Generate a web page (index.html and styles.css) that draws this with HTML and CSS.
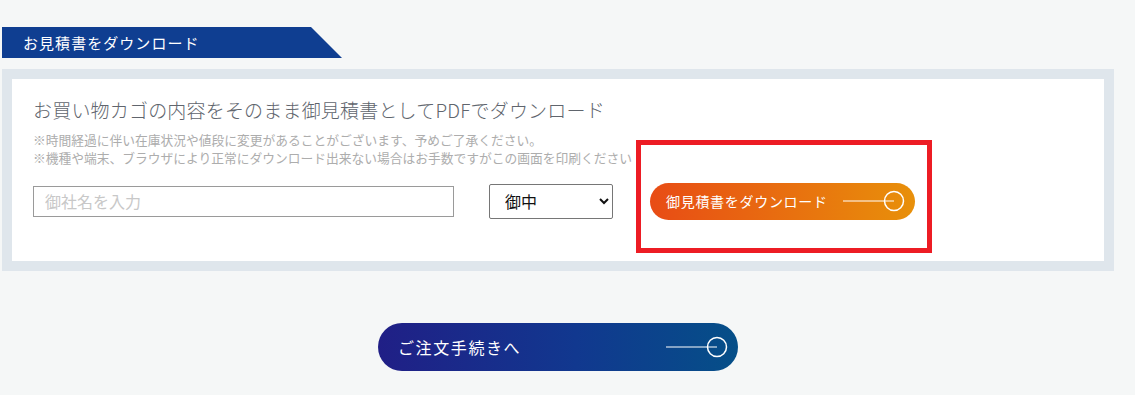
FILE: index.html
```html
<!DOCTYPE html>
<html lang="ja">
<head>
  <meta charset="UTF-8">
  <title>お見積書をダウンロード</title>
  <link rel="stylesheet" href="styles.css">
</head>
<body>
<div class="wrap">
  <div class="tab">お見積書をダウンロード</div>

  <div class="quote-box">
    <div class="quote-inner">
      <h2 class="lead">お買い物カゴの内容をそのまま御見積書としてPDFでダウンロード</h2>
      <p class="note">※時間経過に伴い在庫状況や値段に変更があることがございます、予めご了承ください。<br>※機種や端末、ブラウザにより正常にダウンロード出来ない場合はお手数ですがこの画面を印刷ください</p>
      <div class="form-row">
        <input class="company" type="text" placeholder="御社名を入力">
        <select class="honor">
          <option>御中</option>
          <option>様</option>
        </select>
        <button class="btn btn-orange">
          <span>御見積書をダウンロード</span>
          <svg width="62" height="22" viewBox="0 0 62 22"><line x1="0" y1="11" x2="51" y2="11" stroke="#fff" stroke-width="1.2"/><circle cx="51" cy="11" r="9.5" fill="none" stroke="#fff" stroke-width="1.5"/></svg>
        </button>
      </div>
    </div>
  </div>

  <button class="btn btn-blue">
    <span>ご注文手続きへ</span>
    <svg width="62" height="22" viewBox="0 0 62 22"><line x1="0" y1="11" x2="51" y2="11" stroke="#fff" stroke-width="1.2"/><circle cx="51" cy="11" r="9.5" fill="none" stroke="#fff" stroke-width="1.5"/></svg>
  </button>

  <div class="mark"></div>
</div>
</body>
</html>
```

FILE: styles.css
```css
body {
  margin: 0;
  padding: 27px 0 0;
  background: #f5f7f7;
  font-family: "Noto Sans CJK JP", "Noto Sans", sans-serif;
}

.wrap {
  position: relative;
  width: 1112px;
  margin-left: 2px;
}

.tab {
  width: 319px;
  height: 31px;
  padding-left: 21px;
  background: #0f3e91;
  color: #fff;
  font-size: 15px;
  letter-spacing: 0.07em;
  line-height: 31px;
  clip-path: polygon(0 0, 309px 0, 340px 100%, 0 100%);
}

.quote-box {
  margin-top: 11px;
  border: 10px solid #dfe6ec;
  background: #fff;
}

.quote-inner {
  padding: 17px 21px 41px;
}

.lead {
  margin: 0 0 7px;
  font-size: 19px;
  font-weight: 300;
  letter-spacing: 0.01em;
  line-height: 28px;
  color: #60656d;
}

.note {
  margin: 0;
  font-size: 12.75px;
  line-height: 18px;
  color: #adadad;
  white-space: nowrap;
}

.form-row {
  display: flex;
  align-items: center;
  margin-top: 15px;
  height: 38px;
}

.company {
  box-sizing: border-box;
  width: 421px;
  height: 31px;
  padding: 0 11px;
  border: 1px solid #9a9a9a;
  font-family: inherit;
  font-size: 16px;
  color: #333;
}

.company::placeholder {
  color: #c8c8c8;
}

.honor {
  box-sizing: border-box;
  width: 124px;
  height: 35px;
  margin-left: 35px;
  padding-left: 11px;
  border: 1px solid #767676;
  border-radius: 2px;
  background: #fff;
  font-family: inherit;
  font-size: 16px;
  color: #111;
}

.btn {
  display: flex;
  align-items: center;
  justify-content: space-between;
  box-sizing: border-box;
  border: none;
  border-radius: 999px;
  color: #fff;
  font-family: inherit;
  cursor: pointer;
}

.btn svg {
  display: block;
}

.btn-orange {
  width: 265px;
  height: 37px;
  margin-left: 37px;
  padding: 0 10px 0 16px;
  background: linear-gradient(90deg, #e84c15, #e8900a);
  font-size: 14px;
  letter-spacing: 0.05em;
}

.btn-blue {
  width: 360px;
  height: 48px;
  margin: 52px auto 0;
  padding: 0 10px 0 20px;
  background: linear-gradient(90deg, #201f86, #11388f 55%, #054f88);
  font-size: 16px;
  letter-spacing: 0.1em;
}

.mark {
  position: absolute;
  left: 634px;
  top: 113px;
  width: 286px;
  height: 103px;
  border: 5px solid #ed1c24;
  pointer-events: none;
}
```
